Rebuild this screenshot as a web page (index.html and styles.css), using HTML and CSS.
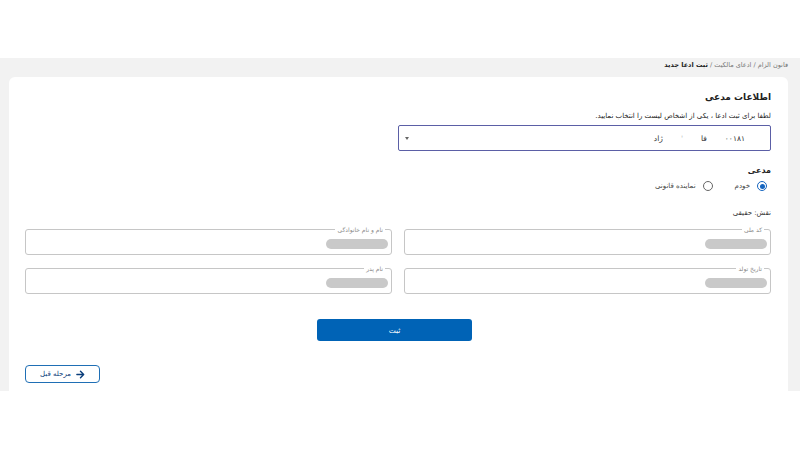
FILE: index.html
```html
<!DOCTYPE html>
<html lang="fa" dir="rtl">
<head>
<meta charset="utf-8">
<link rel="stylesheet" href="styles.css">
</head>
<body>
<div class="topbar"></div>
<main class="area">
  <div class="crumbs"><span>قانون الزام</span> / <span>ادعای مالکیت</span> / <b>ثبت ادعا جدید</b></div>
  <section class="card">
    <h1 class="title">اطلاعات مدعی</h1>
    <p class="hint">لطفا برای ثبت ادعا ، یکی از اشخاص لیست را انتخاب نمایید.</p>
    <div class="select">
      <div class="sel-text"><span>۰۰۱۸۱</span><span>فا</span><span class="faint">'</span><span>ژاد</span></div>
      <span class="caret"></span>
    </div>
    <div class="sub">مدعی</div>
    <div class="radios">
      <label class="radio"><span class="dot on"></span>خودم</label>
      <label class="radio"><span class="dot"></span>نماینده قانونی</label>
    </div>
    <div class="role">نقش: حقیقی</div>
    <div class="grid">
      <div class="field"><span class="flabel">کد ملی</span><span class="blob"></span></div>
      <div class="field"><span class="flabel">نام و نام خانوادگی</span><span class="blob"></span></div>
      <div class="field"><span class="flabel">تاریخ تولد</span><span class="blob"></span></div>
      <div class="field"><span class="flabel">نام پدر</span><span class="blob"></span></div>
    </div>
    <div class="actions"><button class="submit">ثبت</button></div>
    <div class="back-row">
      <button class="back">
        <svg width="9" height="9" viewBox="0 0 10 10"><path d="M1 5h7M5 1.5 8.5 5 5 8.5" fill="none" stroke="#0a3d7a" stroke-width="1.6" stroke-linecap="round" stroke-linejoin="round"/></svg>
        <span>مرحله قبل</span>
      </button>
    </div>
  </section>
</main>
</body>
</html>
```
FILE: styles.css
```css
* { box-sizing: border-box; }
html, body { margin: 0; padding: 0; background: #fff; }
body {
  font-family: "DejaVu Sans", "Noto Sans", sans-serif;
  color: #222;
  direction: rtl;
}
.topbar { height: 58px; background: #fff; }
.area {
  background: #f2f2f2;
  height: 333px;
  padding: 0 12px 0 9px;
  display: flex;
  flex-direction: column;
  overflow: hidden;
}
.crumbs {
  height: 19px;
  line-height: 13px;
  padding-top: 1px;
  font-size: 6.5px;
  color: #777;
}
.crumbs b { color: #222; font-weight: 700; }
.card {
  flex: 1;
  background: #fff;
  border-radius: 6px 6px 0 0;
  padding: 13px 17px 8px 16px;
  display: flex;
  flex-direction: column;
}
.title {
  margin: 0;
  font-size: 9px;
  line-height: 14px;
  font-weight: 700;
  color: #222;
}
.hint {
  margin: 6px 0 0;
  font-size: 7px;
  line-height: 12px;
  color: #222;
}
.select {
  margin-top: 3px;
  width: 50%;
  height: 26px;
  border: 1.5px solid #5b5fa6;
  border-radius: 2px;
  display: flex;
  align-items: center;
  justify-content: space-between;
  padding: 0 25px 0 6px;
}
.sel-text { display: flex; gap: 18px; font-size: 7.5px; color: #333; }
.sel-text .faint { color: #bbb; }
.caret {
  width: 0; height: 0;
  border-left: 2.5px solid transparent;
  border-right: 2.5px solid transparent;
  border-top: 3px solid #666;
}
.sub {
  margin-top: 14px;
  font-size: 8px;
  line-height: 12px;
  font-weight: 700;
  color: #222;
}
.radios {
  margin-top: 3px;
  display: flex;
  gap: 22px;
  height: 12px;
  align-items: center;
  padding-right: 4px;
}
.radio {
  display: flex;
  align-items: center;
  gap: 7px;
  font-size: 7px;
  color: #444;
}
.dot {
  width: 10px; height: 10px;
  border-radius: 50%;
  border: 1px solid #666;
  display: inline-block;
  position: relative;
}
.dot.on { border: 1.3px solid #1565c0; }
.dot.on::after {
  content: "";
  position: absolute;
  inset: 1.5px;
  border-radius: 50%;
  background: #1565c0;
}
.role {
  margin-top: 15px;
  font-size: 7px;
  line-height: 12px;
  color: #333;
}
.grid {
  margin-top: 10px;
  display: grid;
  grid-template-columns: 1fr 1fr;
  column-gap: 12px;
  row-gap: 13px;
}
.field {
  position: relative;
  height: 26px;
  border: 1px solid #c6c6c6;
  border-radius: 3px;
  display: flex;
  align-items: center;
  padding: 0 3px 0 6px;
}
.flabel {
  position: absolute;
  top: -4px;
  right: 6px;
  background: #fff;
  padding: 0 2px;
  font-size: 6px;
  line-height: 7px;
  color: #888;
}
.blob {
  width: 62px;
  height: 10px;
  margin-top: 3px;
  border-radius: 6px;
  background: #c9c9c9;
}
.actions {
  margin-top: 25px;
  display: flex;
  justify-content: center;
}
.submit {
  width: 155px;
  height: 22px;
  border: 0;
  border-radius: 3px;
  background: #0063b6;
  color: #fff;
  font-family: inherit;
  font-size: 7.5px;
  padding: 0;
  margin-right: 7px;
}
.back-row {
  margin-top: 24px;
  display: flex;
  justify-content: flex-end;
}
.back {
  width: 75px;
  height: 18px;
  border: 1px solid #1f6fb5;
  border-radius: 4px;
  background: #fff;
  display: flex;
  align-items: center;
  justify-content: center;
  gap: 5px;
  font-family: inherit;
  font-size: 7px;
  color: #0a3d7a;
  padding: 0;
}
```
